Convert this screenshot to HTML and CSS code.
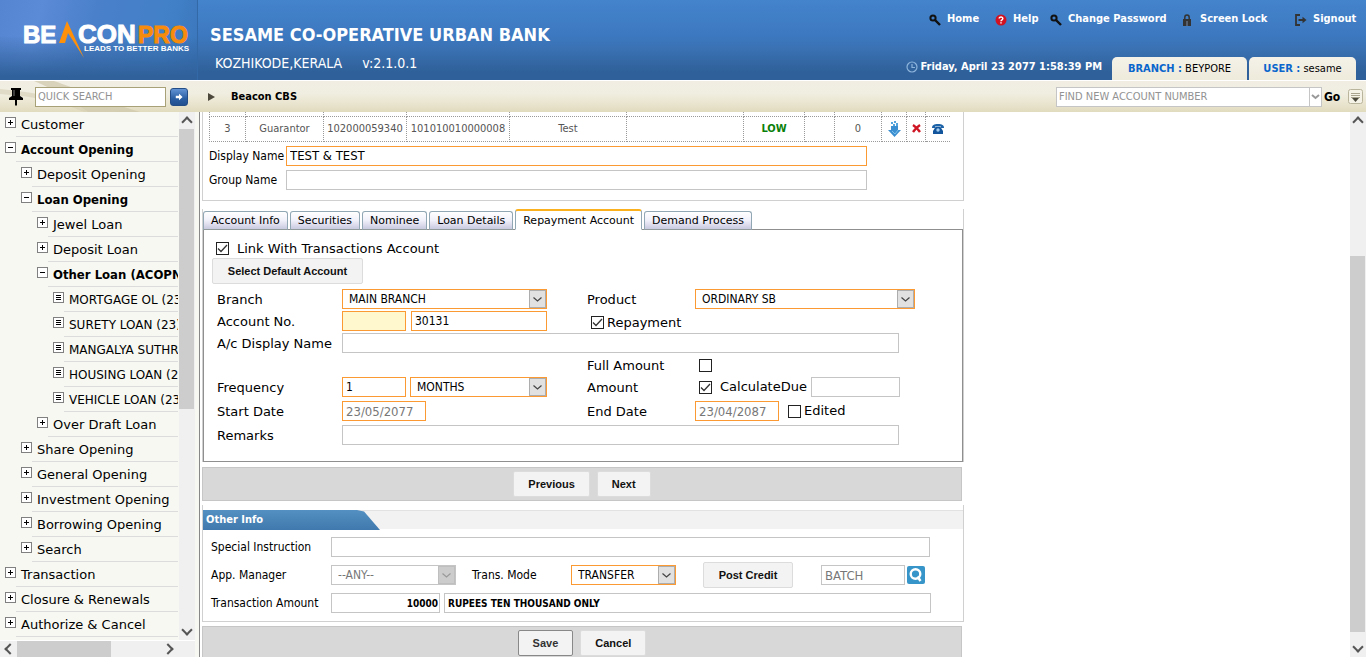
FILE: index.html
```html
<!DOCTYPE html>
<html lang="en">
<head>
<meta charset="utf-8">
<title>Beacon CBS</title>
<link rel="stylesheet" href="styles.css">
</head>
<body>
<header class="header">
  <div class="logo">
    <svg width="197" height="80" viewBox="0 0 197 80" role="img" aria-label="BeaconPro">
      <g font-family="Liberation Sans, Arial, sans-serif" font-weight="700" font-size="23" stroke-width="1">
        <text x="23" y="43" fill="#fff" stroke="#fff" font-size="24">BE</text>
        <text x="78" y="43" fill="#fff" stroke="#fff" font-size="26">CON</text>
        <text x="138" y="43" fill="#f78b0c" stroke="#f78b0c">PRO</text>
      </g>
      <path d="M59 43 L67 21 L84 58 L68 33 L65 43 Z" fill="#ff910a"/>
      <text x="84" y="51" fill="#fff" font-family="Liberation Sans, Arial, sans-serif" font-weight="700" font-size="8">LEADS TO BETTER BANKS</text>
    </svg>
  </div>
  <div class="bank">
    <h1 class="bank-name">SESAME CO-OPERATIVE URBAN BANK</h1>
    <p class="bank-place"><span>KOZHIKODE,KERALA</span><span>v:2.1.0.1</span></p>
  </div>
  <div class="header-right">
    <nav class="nav">
      <a href="#" class="nav-home"><svg width="12" height="12" viewBox="0 0 12 12"><circle cx="4" cy="4" r="2.6" fill="none" stroke="#111" stroke-width="2"/><path d="M6 6 L11 11" stroke="#111" stroke-width="2.4"/></svg>Home</a>
      <a href="#" class="nav-help"><svg width="12" height="12" viewBox="0 0 12 12"><circle cx="6" cy="6" r="5.5" fill="#d21220"/><path d="M4.2 4.6 C4.2 2.5 8 2.6 7.8 4.7 C7.7 5.8 6 5.8 6 7.2 M6 8.3 V9.6" fill="none" stroke="#fff" stroke-width="1.5"/></svg>Help</a>
      <a href="#" class="nav-password"><svg width="12" height="12" viewBox="0 0 12 12"><circle cx="4" cy="4" r="2.6" fill="none" stroke="#111" stroke-width="2"/><path d="M6 6 L11 11" stroke="#111" stroke-width="2.4"/></svg>Change Password</a>
      <a href="#" class="nav-lock"><svg width="12" height="12" viewBox="0 0 12 12"><path d="M2.8 6 V3.5 C2.8 0.3 7.2 0.3 7.2 3.5 V6" fill="none" stroke="#333" stroke-width="1.5"/><rect x="1" y="5" width="8" height="7" fill="#333"/><path d="M5 7 V12" stroke="#6d7e95" stroke-width="1.2"/></svg>Screen Lock</a>
      <a href="#" class="nav-signout"><svg width="12" height="12" viewBox="0 0 12 12"><path d="M5 1 H1 V11 H5" fill="none" stroke="#333" stroke-width="1.8"/><path d="M3.5 6 H9" stroke="#333" stroke-width="2"/><path d="M7.5 2.8 L11.5 6 L7.5 9.2 Z" fill="#333"/></svg>Signout</a>
    </nav>
    <div class="status">
      <span class="clock"><svg width="12" height="12" viewBox="0 0 12 12"><circle cx="6" cy="6" r="5" fill="none" stroke="#8db4dc" stroke-width="1.2"/><path d="M6 3 V6.5 H9" fill="none" stroke="#8db4dc" stroke-width="1.2"/></svg>Friday, April 23 2077 1:58:39 PM</span>
      <span class="status-tab status-branch"><b>BRANCH :</b> BEYPORE</span>
      <span class="status-tab status-user"><b>USER :</b> sesame</span>
    </div>
  </div>
</header>

<div class="toolbar">
  <svg class="swoosh" width="200" height="31" viewBox="0 0 200 31" aria-hidden="true"><path d="M34 0 L54 0 C78 8 100 19 140 31 L88 31 C76 22 58 10 34 0 Z" fill="#cfc8ab" opacity=".7"/><path d="M0 8 C40 12 84 20 118 31 L84 31 C60 20 30 15 0 13 Z" fill="#d5cfb4" opacity=".6"/></svg>
  <button class="pin" aria-label="Pin menu"><svg width="14" height="18" viewBox="0 0 14 18"><path d="M2 0 H12 V2 H11 V8 L14 10 V12 H8 V17 L7 18 L6 17 V12 H0 V10 L3 8 V2 H2 Z" fill="#000"/><path d="M5 2 V8" stroke="#777"/></svg></button>
  <input class="quick" type="text" placeholder="QUICK SEARCH" aria-label="Quick search">
  <button class="quick-go" aria-label="Search"><svg width="8" height="8" viewBox="0 0 10 10"><path d="M1 3.500 H5 V1 L9.5 5 L5 9 V6.500 H1 Z" fill="#fff"/></svg></button>
  <svg class="crumb-arrow" width="8" height="8" viewBox="0 0 8 8"><path d="M0 0 L7 4 L0 8 Z" fill="#4c483c"/></svg>
  <b class="crumb">Beacon CBS</b>
  <div class="find">
    <input class="find-input" type="text" placeholder="FIND NEW ACCOUNT NUMBER" aria-label="Find new account number">
    <button class="find-drop" aria-label="Account list"><svg width="9" height="6" viewBox="0 0 9 6"><path d="M1 1 L4.500 4 L8 1" fill="none" stroke="#999" stroke-width="2"/></svg></button>
    <button class="find-go">Go</button>
    <button class="find-menu" aria-label="Options"><svg width="15" height="15" viewBox="0 0 15 15"><rect x=".5" y=".5" width="14" height="14" rx="2" fill="#f5f3e8" stroke="#b9b49c"/><path d="M3 4.500 H12 M3 6.500 H12 M3 8.500 H12" stroke="#a9a48d"/><path d="M4 9 H11 L7.500 13 Z" fill="#4a473b"/></svg></button>
  </div>
</div>

<main class="main">
  <aside class="sidebar">
    <div class="tree-area">
      <ul class="tree">
        <li class="l0 plus"><a href="#">Customer</a></li>
        <li class="l0 minus"><a href="#">Account Opening</a></li>
        <li class="l1 plus"><a href="#">Deposit Opening</a></li>
        <li class="l1 minus"><a href="#">Loan Opening</a></li>
        <li class="l2 plus"><a href="#">Jewel Loan</a></li>
        <li class="l2 plus"><a href="#">Deposit Loan</a></li>
        <li class="l2 minus"><a href="#">Other Loan (ACOPN)</a></li>
        <li class="l3 leaf"><a href="#">MORTGAGE OL (23)</a></li>
        <li class="l3 leaf"><a href="#">SURETY LOAN (23)</a></li>
        <li class="l3 leaf"><a href="#">MANGALYA SUTHRA</a></li>
        <li class="l3 leaf"><a href="#">HOUSING LOAN (23)</a></li>
        <li class="l3 leaf"><a href="#">VEHICLE LOAN (23)</a></li>
        <li class="l2 plus"><a href="#">Over Draft Loan</a></li>
        <li class="l1 plus"><a href="#">Share Opening</a></li>
        <li class="l1 plus"><a href="#">General Opening</a></li>
        <li class="l1 plus"><a href="#">Investment Opening</a></li>
        <li class="l1 plus"><a href="#">Borrowing Opening</a></li>
        <li class="l1 plus"><a href="#">Search</a></li>
        <li class="l0 plus"><a href="#">Transaction</a></li>
        <li class="l0 plus"><a href="#">Closure &amp; Renewals</a></li>
        <li class="l0 plus"><a href="#">Authorize &amp; Cancel</a></li>
      </ul>
      <div class="vbar vbar-tree"><i class="arrow up"></i><i class="thumb"></i><i class="arrow down"></i></div>
    </div>
    <div class="hbar"><i class="arrow left"></i><i class="thumb"></i><i class="arrow right"></i></div>
  </aside>

  <section class="content">
    <div class="form">
      <div class="panel holders">
        <table class="grid">
          <colgroup><col class="c36"><col class="c78"><col class="c83"><col class="c103"><col class="c117"><col class="c117"><col class="c61"><col class="c30"><col class="c47"><col class="c25"><col class="c19"><col class="c24"></colgroup>
          <tr class="cut"><td></td><td></td><td></td><td></td><td></td><td></td><td></td><td></td><td></td><td></td><td></td><td></td></tr>
          <tr><td>3</td><td>Guarantor</td><td>102000059340</td><td>101010010000008</td><td>Test</td><td></td><td class="low">LOW</td><td></td><td>0</td>
            <td><a href="#" aria-label="Download"><svg width="13" height="16" viewBox="0 0 13 16"><path d="M3 5 H10 V9 H13 L6.500 16 L0 9 H3 Z" fill="#3b8fd0"/><path d="M3 1 h2 v2 h-2z M6 0 h2 v2 h-2z M8 2 h2 v3 h-2z M5 3 h2 v2 h-2z" fill="#56a4dc"/><path d="M4 10 L7 13 L10 9" stroke="#7cc0ec" fill="none"/></svg></a></td>
            <td><a href="#" aria-label="Delete"><svg width="9" height="9" viewBox="0 0 9 9"><path d="M1 1 C4 3 6 5 8 8 M8 1 C5 3 3 5 1 8" stroke="#cf1625" stroke-width="2.400"/></svg></a></td>
            <td><a href="#" aria-label="Phone"><svg width="12" height="10" viewBox="0 0 12 10"><path d="M0 4 C0 1 2 0 6 0 C10 0 12 1 12 4 H9 V2.600 H3 V4 Z" fill="#1d63a8"/><path d="M3.500 3 H8.500 L11 7 V10 H1 V7 Z" fill="#12559c"/><circle cx="6" cy="6" r="1.700" fill="#a4cdf0"/></svg></a></td></tr>
        </table>
        <div class="name-row"><label for="dn">Display Name</label><input id="dn" class="req large" type="text" value="TEST &amp; TEST"></div>
        <div class="name-row"><label for="gn">Group Name</label><input id="gn" type="text"></div>
      </div>

      <div class="tabbed">
        <div class="tabs" role="tablist">
          <button class="tab" role="tab">Account Info</button>
          <button class="tab" role="tab">Securities</button>
          <button class="tab" role="tab">Nominee</button>
          <button class="tab" role="tab">Loan Details</button>
          <button class="tab active" role="tab" aria-selected="true">Repayment Account</button>
          <button class="tab" role="tab">Demand Process</button>
        </div>
        <div class="tab-body">
          <label class="link-row"><input type="checkbox" checked>Link With Transactions Account</label>
          <button class="btn default-account">Select Default Account</button>
          <div class="fields">
            <label for="br">Branch</label>
            <select id="br" class="req w205"><option>MAIN BRANCH</option></select>
            <label for="pr">Product</label>
            <select id="pr" class="req w220"><option>ORDINARY SB</option></select>

            <label for="ac">Account No.</label>
            <div class="pair"><input class="req w64 pale" type="text" aria-label="Account prefix"><input id="ac" class="req w136" type="text" value="30131"></div>
            <label class="repay"><input type="checkbox" checked>Repayment</label>
            <span></span>

            <label for="ad">A/c Display Name</label>
            <input id="ad" class="wide" type="text">

            <label for="fa" class="col3">Full Amount</label>
            <div class="pair indent"><input id="fa" type="checkbox"></div>

            <label for="fr">Frequency</label>
            <div class="pair tight"><input id="fr" class="req w64" type="text" value="1"><select class="req w137" aria-label="Frequency unit"><option>MONTHS</option></select></div>
            <label for="am">Amount</label>
            <div class="pair indent"><label class="calc"><input type="checkbox" checked>CalculateDue</label><input id="am" class="w89" type="text"></div>

            <label for="sd">Start Date</label>
            <input id="sd" class="req w84 large" type="text" placeholder="23/05/2077">
            <label for="ed">End Date</label>
            <div class="pair dates"><input id="ed" class="req w84 large" type="text" placeholder="23/04/2087"><label class="edited"><input type="checkbox">Edited</label></div>

            <label for="rm">Remarks</label>
            <input id="rm" class="wide" type="text">
          </div>
        </div>
      </div>

      <div class="bar"><button class="btn">Previous</button><button class="btn">Next</button></div>

      <div class="panel other">
        <h2 class="other-head"><span>Other Info</span></h2>
        <div class="other-row"><label for="si">Special Instruction</label><input id="si" class="w599" type="text"></div>
        <div class="other-row">
          <label for="mg">App. Manager</label>
          <select id="mg" class="w125" disabled><option>--ANY--</option></select>
          <label for="tm" class="mode">Trans. Mode</label>
          <select id="tm" class="req w105"><option>TRANSFER</option></select>
          <button class="btn post">Post Credit</button>
          <input class="w84 large" type="text" placeholder="BATCH" aria-label="Batch">
          <button class="lookup" aria-label="Find batch"><svg width="18" height="18" viewBox="0 0 18 18"><rect width="18" height="18" rx="2" fill="#3795c9"/><circle cx="8.500" cy="8" r="4.800" fill="none" stroke="#fff" stroke-width="2.400"/><path d="M10.500 10.500 L13.500 15" stroke="#fff" stroke-width="2.400"/></svg></button>
        </div>
        <div class="other-row">
          <label for="ta">Transaction Amount</label>
          <input id="ta" class="w109 amount" type="text" value="10000">
          <input class="w487 words" type="text" value="RUPEES TEN THOUSAND ONLY" aria-label="Amount in words">
        </div>
      </div>

      <div class="bar"><button class="btn save">Save</button><button class="btn">Cancel</button></div>
    </div>
  </section>
  <div class="vbar vbar-main"><i class="arrow up"></i><i class="thumb"></i><i class="arrow down"></i></div>
</main>
</body>
</html>
```
FILE: styles.css
```css
:root {
  --tahoma: "DejaVu Sans Condensed", "Noto Sans", sans-serif;
  --verdana: "DejaVu Sans", sans-serif;
  --arial: "Liberation Sans", Arial, sans-serif;
}
* { box-sizing: border-box; }
body {
  margin: 0;
  height: 100vh;
  display: flex;
  flex-direction: column;
  overflow: hidden;
  background: #fff;
  font: 12px/16px var(--tahoma);
  color: #000;
  padding-bottom: 2px;
}
a { color: inherit; text-decoration: none; }
button { border: 0; padding: 0; background: none; font: inherit; color: inherit; }
svg { display: block; flex: none; }

.header {
  flex: none;
  height: 80px;
  display: flex;
  background: linear-gradient(#4484cc, #3c78bf 45%, #3a72b4 60%, #2f6099 90%);
  color: #fff;
}
.logo {
  width: 198px;
  flex: none;
  background: linear-gradient(to bottom, transparent 45%, #30619b 95%), linear-gradient(105deg, #5584d0, #5b8ad6 20%, #4a80ca 45%, #4180c7 80%, #3a75ba);
  border-right: 1px solid #3469a8;
}
.bank { flex: 1; padding: 25px 0 0 12px; white-space: nowrap; }
.bank-name { margin: 0 0 8px; font: bold 18px/20px var(--tahoma); }
.bank-place { margin: 0; padding-left: 5px; display: flex; gap: 20px; font-size: 14px; line-height: 20px; }
.header-right { display: flex; flex-direction: column; justify-content: space-between; align-items: flex-end; padding: 11px 10px 0 0; font-weight: bold; font-size: 11px; }
.nav { display: flex; }
.nav a { display: flex; align-items: center; gap: 6px; white-space: nowrap; }
.nav svg { margin-top: 2px; }
.nav-home { width: 66px; }
.nav-help { width: 55px; }
.nav-password { width: 132px; }
.nav-lock { width: 113px; }
.nav-signout { width: 61px; }
.status { display: flex; gap: 2px; }
.clock { display: flex; align-items: center; gap: 3px; padding: 0 8px 4px 0; }
.status-tab { height: 23px; padding-top: 4px; text-align: center; background: linear-gradient(#f4f1e8, #eeebdc); border-radius: 5px 5px 0 0; color: #000; font-weight: normal; }
.status-tab b { color: #0a66cc; }
.status-branch { width: 135px; }
.status-user { width: 107px; }

.toolbar {
  flex: none;
  height: 32px;
  display: flex;
  align-items: center;
  position: relative;
  border-top: 1px solid #fff;
  background: linear-gradient(#f1ede3, #f0eee1 40%, #ebe7d3 65%, #e1dbbe);
}
.swoosh { position: absolute; left: 0; top: 0; }
.toolbar > :not(.swoosh) { position: relative; }
.pin { margin: 0 12px 0 9px; }
.quick { width: 131px; }
.quick-go { width: 18px; height: 18px; margin: 0 20px 0 4px; display: grid; place-items: center; border-radius: 3px; border: 1px solid #234d86; background: linear-gradient(#6193d4, #2b5fa3 60%, #23508f); }
.crumb { margin-left: 15px; font-size: 11px; }
.find { margin-left: auto; display: flex; align-items: center; }
.find-input { width: 254px; }
.find-drop { width: 12px; height: 20px; display: grid; place-items: center; border: 1px solid #c5c5c5; border-left: 0; background: #fff; }
.find-go { margin: 0 8px 0 2px; font-weight: bold; width: 16px; }
.find-menu { margin-right: 3px; }

.main { flex: 1; min-height: 0; display: flex; }
.sidebar { flex: none; width: 200px; padding-right: 4px; display: flex; flex-direction: column; background: #f7f8f2; border-right: 1px solid #888; }
.tree-area { flex: 1; min-height: 0; display: flex; }
.tree { flex: 1; min-width: 0; margin: 0; padding: 0 1px 0 0; list-style: none; overflow: hidden; font: 13px/24px var(--verdana); }
.tree li { height: 25px; border-bottom: 1px solid #dcdcdc; position: relative; margin-left: 16px; }
.tree a { display: block; height: 24px; padding: 1px 0 0 5px; overflow: hidden; white-space: nowrap; }
.tree .l1 { margin-left: 32px; }
.tree .l2 { margin-left: 48px; }
.tree .l3 { margin-left: 64px; font-size: 12px; }
.tree .minus { font-family: var(--tahoma); font-weight: bold; }
.tree li::before { content: ""; position: absolute; left: -11px; top: 5px; width: 9px; height: 9px; border: 1px solid #808080; background: #fff center no-repeat; }
.tree .plus::before { background-image: linear-gradient(#000, #000), linear-gradient(#000, #000); background-size: 5px 1px, 1px 5px; }
.tree .minus::before { background-image: linear-gradient(#000, #000); background-size: 5px 1px; }
.tree .leaf::before { background-image: repeating-linear-gradient(#000 0 1px, #fff 1px 2px); background-size: 5px 5px; }

.vbar { flex: none; width: 16px; display: flex; flex-direction: column; background: #f0f0f0; }
.hbar { flex: none; height: 17px; display: flex; align-items: stretch; background: #f0f0f0; border-top: 1px solid #fff; }
.thumb { background: #cdcdcd; }
.vbar .thumb { margin-right: 1px; }
.vbar-tree .thumb { height: 280px; margin-bottom: auto; }
.vbar-main .thumb { height: 376px; margin-top: auto; }
.hbar .thumb { width: 94px; }
.arrow { flex: none; width: 17px; height: 17px; display: grid; place-items: center; }
.vbar .arrow { width: 15px; }
.hbar .arrow { height: 16px; }
.arrow::before { content: ""; width: 6px; height: 6px; border: solid #555; border-width: 2px 0 0 2px; transform: rotate(45deg); }
.up::before { margin-top: 3px; }
.down::before { transform: rotate(225deg); margin-bottom: 3px; }
.left::before { transform: rotate(-45deg); margin-left: 2px; }
.right::before { transform: rotate(135deg); margin-right: 4px; }
.vbar-main .down { height: 25px; }
.vbar-main .down::before { margin: 4px 0 0; }
.hbar .right { margin-left: auto; margin-right: 17px; }

.content { flex: 1; min-width: 0; overflow: hidden; padding-left: 2px; }
.form { width: 762px; }
.panel { border: 1px solid #d0d0d0; border-top: 0; }
.holders { height: 89px; margin-bottom: 8px; padding-left: 6px; }
.grid { table-layout: fixed; border-collapse: collapse; width: 740px; color: #555; font-size: 11px; line-height: 14px; text-align: center; margin-bottom: 4px; }
.grid td { border: 1px dotted #999; padding: 0; height: 25px; white-space: nowrap; }
.grid .cut td { height: 4px; border-top: 0; }
.grid td:last-child { border-right: 0; }
.grid svg { margin: 0 auto; }
.grid .low { color: #0a800a; font-weight: bold; }
.c36 { width: 36px; } .c78 { width: 78px; } .c83 { width: 83px; } .c103 { width: 103px; } .c117 { width: 117px; } .c61 { width: 61px; }
.c30 { width: 30px; } .c47 { width: 47px; } .c25 { width: 25px; } .c19 { width: 19px; } .c24 { width: 24px; }
.name-row { display: flex; align-items: center; margin-bottom: 4px; }
.name-row label { width: 77px; white-space: nowrap; }
.name-row input { width: 581px; }

input[type="text"], select { height: 20px; border: 1px solid #c5c5c5; border-radius: 0; background: #fff; color: #000; font: 12px/16px var(--tahoma); padding: 0 3px; }
input[type="text"]::placeholder { color: #777; opacity: 1; }
input.large[type="text"] { font-size: 13px; }
.toolbar input[type="text"] { font-size: 11px; padding: 0 2px; }
.toolbar input[type="text"]::placeholder { color: #929292; }
.toolbar input.quick[type="text"] { border-color: #a8a077; }
input.req[type="text"], select.req { border-color: #fb9a33; }
input.pale[type="text"] { background: #fff8cf; }
select { appearance: none; padding: 0 18px 0 6px; background: #fff url("data:image/svg+xml,%3Csvg xmlns='http://www.w3.org/2000/svg' width='17' height='18'%3E%3Crect x='.5' y='.5' width='16' height='17' fill='%23e1e1e1' stroke='%23adadad'/%3E%3Cpath d='M4.500 7.500 L8.500 11 L12.500 7.500' fill='none' stroke='%23444' stroke-width='1.200'/%3E%3C/svg%3E") right center no-repeat; }
select:disabled { opacity: 1; color: #777; background-image: url("data:image/svg+xml,%3Csvg xmlns='http://www.w3.org/2000/svg' width='17' height='18'%3E%3Crect x='.5' y='.5' width='16' height='17' fill='%23ccc' stroke='%23bfbfbf'/%3E%3Cpath d='M4.500 7.500 L8.500 11 L12.500 7.500' fill='none' stroke='%23999' stroke-width='1.200'/%3E%3C/svg%3E"); }
input[type="checkbox"] { appearance: none; flex: none; width: 13px; height: 13px; margin: 0; border: 1px solid #222; background: #fff; }
input[type="checkbox"]:checked { background: url("data:image/svg+xml,%3Csvg xmlns='http://www.w3.org/2000/svg' width='11' height='11'%3E%3Cpath d='M1 5.500 L4 8.500 L10 2' fill='none' stroke='%23333' stroke-width='1.300'/%3E%3C/svg%3E"); }
.w64 { width: 64px; } .w84 { width: 84px; } .w89 { width: 89px; } .w105 { width: 105px; } .w109 { width: 109px; } .w125 { width: 125px; }
.w136 { width: 136px; } .w137 { width: 137px; } .w205 { width: 205px; } .w220 { width: 220px; } .w487 { width: 487px; } .w599 { width: 599px; }

.tabbed { border: solid #d0d0d0; border-width: 0 1px; margin-bottom: 5px; }
.tabs { display: flex; align-items: flex-end; gap: 2px; height: 21px; }
.tab { height: 19px; padding: 0 7px; border: 1px solid #91a7b4; border-bottom: 1px solid #919b9c; border-radius: 3px 3px 0 0; background: linear-gradient(#fff, #f0f0fa 50%, #c9c9e0); font: 11px/17px var(--verdana); white-space: nowrap; }
.tab.active { height: 21px; line-height: 19px; border-top: 2px solid #fbb01e; border-bottom-color: #fff; background: #fff; z-index: 1; }
.tab-body { margin-top: -1px; border: 1px solid #8f8f8f; padding: 9px 8px 15px; font: 13px/20px var(--verdana); }
.link-row { display: flex; align-items: center; gap: 8px; padding-left: 4px; height: 19px; }
.btn { height: 26px; padding: 0 14px; border: 1px solid #dcdcdc; border-radius: 2px; background: #f3f3f3; color: #111; font: bold 11px/16px var(--arial); white-space: nowrap; }
.default-account { width: 151px; display: block; }
.fields { display: grid; grid-template-columns: 125px 245px 108px 220px; grid-template-rows: repeat(5, 22px) 26px 22px; align-items: center; padding: 4px 0 0 5px; }
.fields > label { padding-top: 2px; }
.pair { display: flex; align-items: center; gap: 5px; }
.tight { gap: 4px; }
.pair label, .repay { display: flex; align-items: center; }
.fields > .repay { gap: 3px; padding: 3px 0 0 4px; }
.wide { grid-column: 2 / 5; width: 557px; }
.col3 { grid-column: 3; }
.indent { padding-left: 4px; gap: 4px; }
.calc { gap: 8px; }
.dates { gap: 9px; }
.edited { gap: 3px; }

.bar { width: 760px; height: 34px; margin-bottom: 4px; display: flex; justify-content: center; align-items: center; gap: 7px; background: #d8d8d8; border: 1px solid #c6c6c6; }
.save { border-color: #888; color: #333; }
.other { height: 117px; padding-top: 5px; margin-bottom: 4px; }
.other-head { margin: 0 0 8px; height: 19px; background: #f2f2f2; border-top: 1px solid #e2e2e2; display: flex; }
.other-head span { width: 177px; height: 20px; margin-top: -1px; padding-left: 3px; background: linear-gradient(#5490c2, #4079ad); clip-path: polygon(0 0, 87% 0, 91% 8%, 100% 100%, 0 100%); color: #fff; font: bold 11px/20px var(--tahoma); }
.other-row { display: flex; align-items: center; height: 20px; margin-bottom: 8px; padding-left: 8px; }
.other-row > label:first-child { width: 120px; white-space: nowrap; }
.other-row .mode { width: 99px; margin-left: 16px; }
.post { margin: 0 28px 0 27px; width: 90px; }
.lookup { margin-left: 2px; }
.other-row input.amount[type="text"] { text-align: right; padding-right: 1px; margin-right: 4px; }
.other-row input.amount[type="text"], .other-row input.words[type="text"] { font-weight: bold; font-size: 10px; }
```
